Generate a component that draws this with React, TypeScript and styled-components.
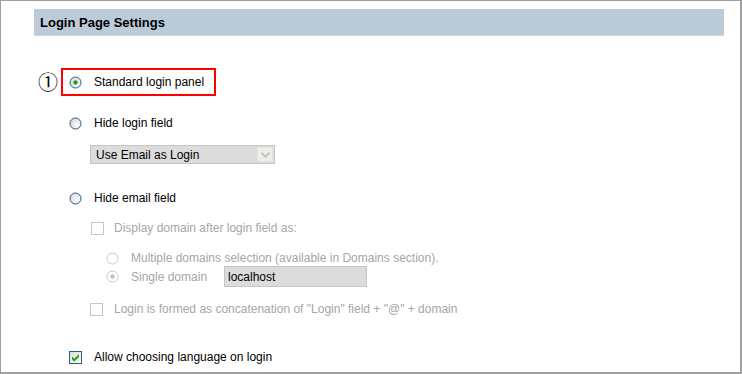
import React from "react";
import styled, { createGlobalStyle } from "styled-components";

const colors = {
  frame: "#a0a0a0",
  header: "#bccbd8",
  headerLine: "#d2d6da",
  text: "#000000",
  disabled: "#a6a6a6",
  field: "#dcdcdc",
  fieldBorder: "#c6c6c6",
  control: "#2c5a88",
  controlOff: "#cac8bb",
  green: "#21a121",
  red: "#ff0000",
};

const GlobalStyle = createGlobalStyle`
  html, body {
    margin: 0;
    padding: 0;
    background: #ffffff;
  }
  body {
    font-family: "Liberation Sans", Arial, sans-serif;
    font-size: 12px;
    color: ${colors.text};
  }
`;

const RadioIcon: React.FC<{ checked?: boolean; disabled?: boolean }> = ({ checked, disabled }) => (
  <svg width="13" height="13" viewBox="0 0 13 13">
    <defs>
      <radialGradient id={disabled ? "rgOff" : "rgOn"} cx="0.65" cy="0.65" r="0.7">
        <stop offset="0" stopColor="#ffffff" />
        <stop offset="1" stopColor={disabled ? "#ffffff" : "#d6d9de"} />
      </radialGradient>
    </defs>
    <circle
      cx="6.5"
      cy="6.5"
      r="5.5"
      fill={`url(#${disabled ? "rgOff" : "rgOn"})`}
      stroke={disabled ? colors.controlOff : colors.control}
      strokeWidth="1"
    />
    {checked && (
      <circle cx="6.5" cy="6.5" r="2.2" fill={disabled ? "#c4c2b6" : colors.green} />
    )}
  </svg>
);

const CheckIcon: React.FC<{ checked?: boolean; disabled?: boolean }> = ({ checked, disabled }) => (
  <svg width="13" height="13" viewBox="0 0 13 13">
    <defs>
      <linearGradient id="cbFill" x1="0" y1="0" x2="1" y2="1">
        <stop offset="0" stopColor="#dcdcd7" />
        <stop offset="1" stopColor="#ffffff" />
      </linearGradient>
    </defs>
    <rect
      x="0.5"
      y="0.5"
      width="12"
      height="12"
      fill={disabled ? "#ffffff" : "url(#cbFill)"}
      stroke={disabled ? colors.controlOff : colors.control}
    />
    {checked && (
      <path d="M3 5.5 L5.3 7.8 L10 3 L10 6 L5.3 10.6 L3 8.4 Z" fill={colors.green} />
    )}
  </svg>
);

const ChevronIcon: React.FC = () => (
  <svg width="9" height="6" viewBox="0 0 9 6">
    <path d="M0.5 0.8 L4.5 4.8 L8.5 0.8" fill="none" stroke="#c4c4c4" strokeWidth="2" />
  </svg>
);

export default function App() {
  return (
    <>
      <GlobalStyle />
      <Frame>
        <Header>
          <HeaderTitle>Login Page Settings</HeaderTitle>
        </Header>

        <MarkedRow>
          <Marker>①</Marker>
          <Highlight>
            <Option gap={12}>
              <RadioIcon checked />
              <Label>Standard login panel</Label>
            </Option>
          </Highlight>
        </MarkedRow>

        <Row indent={35} top={19}>
          <Option gap={12}>
            <RadioIcon />
            <Label>Hide login field</Label>
          </Option>
        </Row>

        <Row indent={56} top={14} height={19}>
          <Select>
            <SelectText>Use Email as Login</SelectText>
            <SelectButton>
              <ChevronIcon />
            </SelectButton>
          </Select>
        </Row>

        <Row indent={35} top={26}>
          <Option gap={12}>
            <RadioIcon />
            <Label>Hide email field</Label>
          </Option>
        </Row>

        <Row indent={57} top={14}>
          <Option gap={10}>
            <CheckIcon disabled />
            <Label disabled>Display domain after login field as:</Label>
          </Option>
        </Row>

        <Row indent={72} top={14}>
          <Option gap={12}>
            <RadioIcon disabled />
            <Label disabled>Multiple domains selection (available in Domains section).</Label>
          </Option>
        </Row>

        <Row indent={72} top={0} height={21}>
          <Option gap={12}>
            <RadioIcon checked disabled />
            <Label disabled width={93}>Single domain</Label>
          </Option>
          <TextField>localhost</TextField>
        </Row>

        <Row indent={56} top={14}>
          <Option gap={11}>
            <CheckIcon disabled />
            <Label disabled>Login is formed as concatenation of "Login" field + "@" + domain</Label>
          </Option>
        </Row>

        <Row indent={35} top={32}>
          <Option gap={12}>
            <CheckIcon checked />
            <Label>Allow choosing language on login</Label>
          </Option>
        </Row>
      </Frame>
    </>
  );
}

const Frame = styled.div`
  box-sizing: border-box;
  width: 742px;
  height: 374px;
  border-top: 1px solid ${colors.frame};
  border-left: 1px solid ${colors.frame};
  border-right: 2px solid ${colors.frame};
  border-bottom: 2px solid ${colors.frame};
  padding: 8px 16px 0 33px;
  display: flex;
  flex-direction: column;
  overflow: hidden;
`;

const Header = styled.div`
  box-sizing: border-box;
  width: 690px;
  height: 27px;
  background: ${colors.header};
  border-bottom: 1px solid ${colors.headerLine};
  display: flex;
  align-items: center;
  padding-left: 6px;
`;

const HeaderTitle = styled.span`
  font-weight: bold;
  font-size: 13px;
  color: #000;
  margin-top: 1px;
`;

const MarkedRow = styled.div`
  display: flex;
  align-items: center;
  margin-top: 32px;
  padding-left: 4px;
`;

const Marker = styled.span`
  font-family: "Noto Sans CJK JP", "DejaVu Sans", sans-serif;
  font-weight: 400;
  font-size: 20px;
  line-height: 28px;
  width: 23px;
  color: #000;
`;

const Highlight = styled.div`
  box-sizing: border-box;
  height: 28px;
  width: 155px;
  border: 2px solid ${colors.red};
  padding-left: 6px;
  display: flex;
  align-items: center;
`;

const Row = styled.div<{ indent: number; top: number; height?: number }>`
  display: flex;
  align-items: center;
  height: ${(p) => p.height ?? 16}px;
  margin-top: ${(p) => p.top}px;
  padding-left: ${(p) => p.indent}px;
`;

const Option = styled.div<{ gap: number }>`
  display: flex;
  align-items: center;
  gap: ${(p) => p.gap}px;

  svg {
    flex: none;
    display: block;
  }
`;

const Label = styled.span<{ disabled?: boolean; width?: number }>`
  font-size: 12px;
  line-height: 16px;
  white-space: nowrap;
  color: ${(p) => (p.disabled ? colors.disabled : colors.text)};
  ${(p) => (p.width ? `width: ${p.width}px;` : "")}
`;

const Select = styled.div`
  box-sizing: border-box;
  width: 185px;
  height: 19px;
  background: ${colors.field};
  border: 1px solid ${colors.fieldBorder};
  display: flex;
  align-items: center;
  justify-content: space-between;
  padding: 0 1px 0 5px;
`;

const SelectText = styled.span`
  font-size: 12px;
  color: #000;
`;

const SelectButton = styled.div`
  box-sizing: border-box;
  width: 16px;
  height: 15px;
  background: #ededea;
  border: 1px solid #e2e2df;
  display: flex;
  align-items: center;
  justify-content: center;
`;

const TextField = styled.div`
  box-sizing: border-box;
  width: 143px;
  height: 21px;
  background: ${colors.field};
  border: 1px solid ${colors.fieldBorder};
  padding-left: 3px;
  display: flex;
  align-items: center;
  font-size: 12px;
  color: #000;
`;
